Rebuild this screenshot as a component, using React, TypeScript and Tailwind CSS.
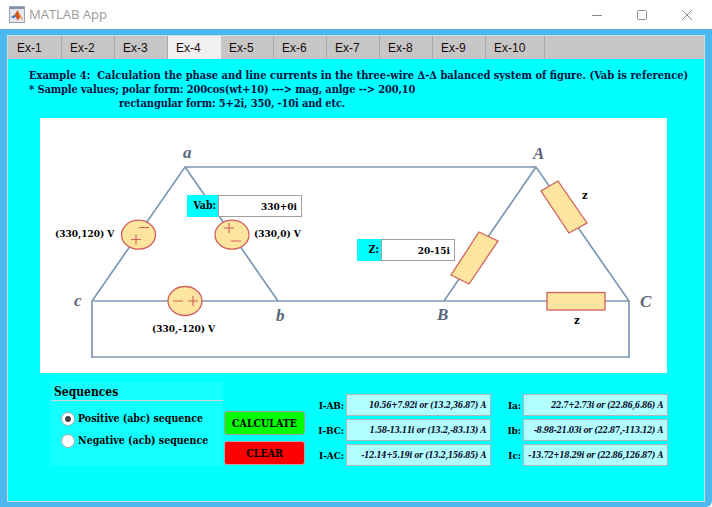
const serif = "font-['DejaVu_Serif_Condensed','DejaVu_Serif','Liberation_Serif',serif]";

const tabs = ["Ex-1", "Ex-2", "Ex-3", "Ex-4", "Ex-5", "Ex-6", "Ex-7", "Ex-8", "Ex-9", "Ex-10"];

function MatlabIcon() {
  return (
    <svg width="16" height="17" viewBox="0 0 16 17" className="shrink-0">
      <rect x="0.5" y="0.5" width="15" height="16" fill="#e4e7ec" stroke="#9aa3b2" />
      <rect x="1" y="1" width="14" height="2" fill="#8791a5" />
      <path d="M2 11 L5.5 9 L8.5 4 L10.5 8 L14 14 L11 11.5 L8.5 14.5 L6.5 10.5 Z" fill="#d9531e" />
      <path d="M2 11 L5.5 9 L7 10 L5 12.5 Z" fill="#3f7fbf" />
      <path d="M8.5 4 L10.5 8 L14 14 L11 11.5 Z" fill="#f0a030" />
    </svg>
  );
}

function Figure() {
  const wire = "#7d98b3";
  const red = "#d0605c";
  const fill = "#fde49f";
  return (
    <svg viewBox="40 118 627 255" width="627" height="255" className="block">
      <g fill="none" stroke={wire} strokeWidth="1.7">
        <path d="M92 357 V301 L185 167 H536 L629 301 V357 Z" />
        <path d="M92 301 H629" />
        <path d="M185 167 L278 301" />
        <path d="M536 167 L444 301" />
      </g>
      <g fill={fill} stroke={red} strokeWidth="1.3">
        <ellipse cx="138.5" cy="234.7" rx="17" ry="14.5" />
        <ellipse cx="232" cy="234.7" rx="17" ry="14.5" />
        <ellipse cx="185" cy="301" rx="17" ry="14.5" />
        <polygon points="558,181 587,223 569,233 541,191" />
        <polygon points="479,232 498,241 469,284 451,275" />
        <rect x="547" y="292.5" width="58" height="17.5" />
      </g>
      <g stroke={red} strokeWidth="1.1" fill="none">
        <path d="M139 227.5 H149 M131 239.5 H141 M136 234.5 V244.5" />
        <path d="M224 228 H234 M229 223 V233 M231 241 H241" />
        <path d="M173 301 H183 M188 301 H198 M193 296 V306" />
      </g>
      <g fill="#5a6678" fontFamily="'Liberation Serif',serif" fontStyle="italic" fontWeight="700" fontSize="17">
        <text x="183" y="158">a</text>
        <text x="74" y="306">c</text>
        <text x="276" y="321">b</text>
        <text x="533" y="159">A</text>
        <text x="437" y="320">B</text>
        <text x="640" y="307">C</text>
      </g>
    </svg>
  );
}

function Overlay({ className, children }: { className: string; children: React.ReactNode }) {
  return <div className={`absolute whitespace-nowrap ${className}`}>{children}</div>;
}

function FieldBox({ className, label, value, labelW, inputW }: { className: string; label: string; value: string; labelW: string; inputW: string }) {
  return (
    <div className={`absolute flex h-[22px] ${className}`}>
      <div className={`${labelW} bg-[#00ffff] flex items-center justify-end pr-[2px] font-bold text-[10.5px] text-black`}>{label}</div>
      <div className={`${inputW} bg-white border border-[#a0a0a0] flex items-center justify-end pr-[4px] font-bold text-[10px] text-black`}>{value}</div>
    </div>
  );
}

function Radio({ on, label }: { on?: boolean; label: string }) {
  return (
    <div className="flex items-center h-[22px]">
      <div className="w-[14px] h-[14px] rounded-full bg-white border border-[#a9a9a9] flex items-center justify-center">
        {on && <div className="w-[6px] h-[6px] rounded-full bg-[#444]" />}
      </div>
      <span className="ml-[3px] text-[10.5px] font-bold text-black">{label}</span>
    </div>
  );
}

function Result({ label, value }: { label: string; value: string }) {
  return (
    <div className="flex items-center h-[22px]">
      <div className="w-[34px] pr-[2px] text-right text-[10px] tracking-[-0.1px] font-bold text-black whitespace-nowrap">{label}</div>
      <div className="w-[145px] h-[22px] bg-[#b2ffff] border border-[#a8b8b8] flex items-center justify-end pr-[4px] text-[8.5px] tracking-[-0.36px] italic font-bold text-[#101030] whitespace-nowrap">{value}</div>
    </div>
  );
}

export default function App() {
  return (
    <div className={`w-[712px] h-[507px] bg-white overflow-hidden ${serif}`}>
      <div className="h-[29px] flex items-center pl-[9px] pr-[20px] bg-white rounded-tr-[8px]">
        <MatlabIcon />
        <span className="ml-[4px] text-[13px] text-[#9a9a9a] font-['Open_Sans',sans-serif] leading-none">MATLAB App</span>
        <div className="ml-auto flex items-center gap-[35px]">
          <svg width="10" height="10" viewBox="0 0 10 10"><path d="M0 5.5 H10" stroke="#8a8a8a" /></svg>
          <svg width="10" height="10" viewBox="0 0 10 10"><rect x="0.5" y="0.5" width="9" height="9" rx="1" fill="none" stroke="#8a8a8a" /></svg>
          <svg width="10" height="10" viewBox="0 0 10 10"><path d="M0 0 L10 10 M10 0 L0 10" stroke="#8a8a8a" /></svg>
        </div>
      </div>

      <div className="w-[712px] h-[478px] bg-[#4db8ee] pl-[7px] pt-[6px] rounded-br-[6px]">
        <div className="w-[698px] h-[467px] flex flex-col border border-[#cfdcdc]">
          <div className="h-[23px] shrink-0 bg-[#c6c6c6] flex font-['Liberation_Sans',sans-serif] text-[12px] text-[#1a0a0a]">
            {tabs.map((t) => (
              <div
                key={t}
                className={`flex items-center border-r border-[#a8a8a8] ${t === "Ex-1" ? "w-[54px] pl-[9px]" : t === "Ex-10" ? "w-[59px] pl-[8px]" : "w-[53px] pl-[8px]"} ${t === "Ex-4" ? "bg-[#f0f0f0] border-r-0" : ""}`}
              >
                {t}
              </div>
            ))}
          </div>

          <div className="flex-1 bg-[#00ffff] pt-[10px]">
            <div className="pl-[21px] text-[11px] leading-[14px] font-bold text-[#001040] whitespace-nowrap h-[49px]">
              <div>Example 4:&nbsp; Calculation the phase and line currents in the three-wire Δ-Δ balanced system of figure. (Vab is reference)</div>
              <div className="tracking-[-0.12px]">* Sample values; polar form: 200cos(wt+10) ---&gt; mag, anlge --&gt; 200,10</div>
              <div className="pl-[90px] tracking-[-0.14px]">rectangular form: 5+2i, 350, -10i and etc.</div>
            </div>

            <div className="relative ml-[32px] w-[627px] h-[255px] bg-white">
              <Figure />
              <FieldBox className="left-[147px] top-[77px]" label="Vab:" value="330+0i" labelW="w-[31px]" inputW="w-[84px]" />
              <FieldBox className="left-[317px] top-[121px]" label="Z:" value="20-15i" labelW="w-[24px]" inputW="w-[74px]" />
              <Overlay className="left-[15px] top-[108px] text-[10px] font-bold text-black">(330,120) V</Overlay>
              <Overlay className="left-[214px] top-[108px] text-[10px] font-bold text-black">(330,0) V</Overlay>
              <Overlay className="left-[112px] top-[203px] text-[10px] font-bold text-black">(330,-120) V</Overlay>
              <Overlay className="left-[542px] top-[70px] text-[11px] font-bold text-black">z</Overlay>
              <Overlay className="left-[534px] top-[195px] text-[11px] font-bold text-black">z</Overlay>
            </div>

            <div className="flex mt-[9px] pl-[43px]">
              <div className="w-[172px] h-[84px] bg-[#14ffff]">
                <div className="h-[19px] border-b border-[#c8d8d8] pl-[3px] pt-[1px] text-[12px] leading-[18px] font-bold text-black">Sequences</div>
                <div className="pl-[10px] pt-[7px]">
                  <Radio on label="Positive (abc) sequence" />
                  <Radio label="Negative (acb) sequence" />
                </div>
              </div>

              <div className="ml-[1px] pt-[29px] flex flex-col gap-[6px]">
                <div className="w-[81px] h-[24px] pt-[1px] rounded-[3px] bg-[#00ff00] border border-[#a0a0a0] flex items-center justify-center text-[10.5px] font-bold text-black">CALCULATE</div>
                <div className="w-[81px] h-[24px] pt-[1px] rounded-[3px] bg-[#ff0000] border border-[#c0a0a0] flex items-center justify-center text-[10.5px] font-bold text-black">CLEAR</div>
              </div>

              <div className="ml-[7px] pt-[12px] grid grid-cols-[179px_179px] gap-x-0 gap-y-[3px] [&>*:nth-child(even)]:ml-[-2px]">
                <Result label="I-AB:" value="10.56+7.92i or (13.2,36.87) A" />
                <Result label="Ia:" value="22.7+2.73i or (22.86,6.86) A" />
                <Result label="I-BC:" value="1.58-13.11i or (13.2,-83.13) A" />
                <Result label="Ib:" value="-8.98-21.03i or (22.87,-113.12) A" />
                <Result label="I-AC:" value="-12.14+5.19i or (13.2,156.85) A" />
                <Result label="Ic:" value="-13.72+18.29i or (22.86,126.87) A" />
              </div>
            </div>
          </div>
        </div>
      </div>
    </div>
  );
}
